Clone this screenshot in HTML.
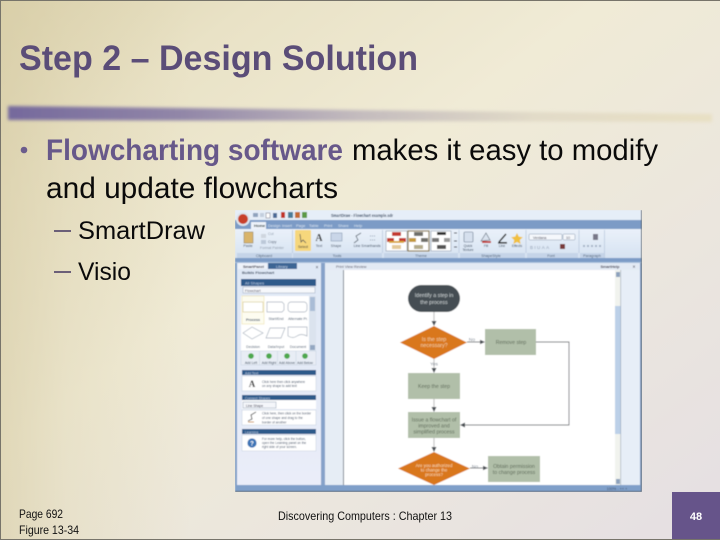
<!DOCTYPE html>
<html lang="en"><head><meta charset="utf-8"><title>Step 2 – Design Solution</title>
<style>
html,body{margin:0;padding:0;width:720px;height:540px;overflow:hidden;background:#eee8d6}
svg{display:block}
text{font-family:"Liberation Sans",sans-serif}
</style></head><body>
<svg width="720" height="540" viewBox="0 0 720 540" xmlns="http://www.w3.org/2000/svg">
<defs>
<linearGradient id="bg" x1="0" y1="0" x2="1" y2="1">
<stop offset="0" stop-color="#ddd4b0"/><stop offset=".18" stop-color="#e9e2c6"/><stop offset=".42" stop-color="#f0ebd6"/><stop offset=".7" stop-color="#ebe6de"/><stop offset="1" stop-color="#e5dfe3"/>
</linearGradient>
<linearGradient id="edge" x1="0" y1="0" x2="1" y2="0">
<stop offset="0" stop-color="#d6cba4" stop-opacity=".6"/><stop offset=".35" stop-color="#d6cba4" stop-opacity=".28"/><stop offset="1" stop-color="#d6cba4" stop-opacity="0"/>
</linearGradient>
<linearGradient id="rule" x1="0" y1="0" x2="1" y2="0">
<stop offset="0" stop-color="#75699c"/><stop offset=".25" stop-color="#9287a8"/><stop offset=".5" stop-color="#c4bcbe"/><stop offset=".75" stop-color="#e2dbc8"/><stop offset="1" stop-color="#e8e0c4"/>
</linearGradient>
<linearGradient id="rib" x1="0" y1="0" x2="0" y2="1"><stop offset="0" stop-color="#eaf1fa"/><stop offset="1" stop-color="#d6e2f1"/></linearGradient>
<linearGradient id="panel" x1="0" y1="0" x2="0" y2="1"><stop offset="0" stop-color="#dfe8f5"/><stop offset="1" stop-color="#eaedf9"/></linearGradient>
<filter id="b2" x="-5%" y="-100%" width="110%" height="300%"><feGaussianBlur stdDeviation="1.7"/></filter>
<filter id="soft" x="0" y="0" width="100%" height="100%"><feGaussianBlur stdDeviation=".4"/></filter>
</defs>

<rect width="720" height="540" fill="url(#bg)"/>
<rect width="190" height="540" fill="url(#edge)"/>
<path d="M.5 540V.5H720" fill="none" stroke="#77746a"/>
<path d="M0 539.500H720" stroke="#77746a"/>

<path d="M8 106L712 114V122L8 120Z" fill="url(#rule)" filter="url(#b2)"/>

<text x="19" y="70" font-size="35" font-weight="bold" fill="#5b4d78" textLength="399" lengthAdjust="spacingAndGlyphs">Step 2 – Design Solution</text>

<circle cx="24" cy="150" r="3.300" fill="#6b5c8c"/>
<text x="46" y="160" font-size="29.500" font-weight="bold" fill="#67588a" textLength="297" lengthAdjust="spacingAndGlyphs">Flowcharting software</text>
<text x="352" y="160" font-size="29.500" fill="#0a0a0a" textLength="306" lengthAdjust="spacingAndGlyphs">makes it easy to modify</text>
<text x="46" y="198" font-size="29.500" fill="#0a0a0a" textLength="292" lengthAdjust="spacingAndGlyphs">and update flowcharts</text>

<rect x="54" y="230" width="17" height="2" fill="#6b5f78"/>
<text x="78" y="239" font-size="25" fill="#0a0a0a" textLength="127" lengthAdjust="spacingAndGlyphs">SmartDraw</text>
<rect x="54" y="271" width="17" height="2" fill="#6b5f78"/>
<text x="78" y="280" font-size="25" fill="#0a0a0a" textLength="53" lengthAdjust="spacingAndGlyphs">Visio</text>

<text x="19" y="518" font-size="12" fill="#111" textLength="44" lengthAdjust="spacingAndGlyphs">Page 692</text>
<text x="19" y="534" font-size="12" fill="#111" textLength="60" lengthAdjust="spacingAndGlyphs">Figure 13-34</text>
<text x="278" y="520" font-size="12" fill="#111" textLength="174" lengthAdjust="spacingAndGlyphs">Discovering Computers : Chapter 13</text>

<rect x="672" y="492" width="48" height="47" fill="#66548a"/>
<text x="696" y="520" font-size="11" font-weight="bold" fill="#fff" text-anchor="middle">48</text>

<!-- application screenshot -->
<g filter="url(#soft)">
<rect x="235" y="210" width="407" height="282" fill="#7d9cc6"/>
<rect x="235" y="210" width="406" height="10" fill="#e6eef8"/>
<rect x="235" y="220" width="406" height="9" fill="#7b9bc6"/>
<circle cx="243" cy="219" r="7" fill="#dfe6ee"/><circle cx="243" cy="219" r="5" fill="#c8402a"/>
<g>
<rect x="253" y="213" width="5" height="4" fill="#8fa3bd"/><rect x="260" y="213" width="4" height="4" fill="#c3cedd"/>
<rect x="266" y="213" width="4" height="5" fill="#fff" stroke="#667" stroke-width=".5"/><rect x="273" y="213" width="4" height="5" fill="#4b6a96"/>
<rect x="281" y="212" width="4" height="6" fill="#c2362b"/><rect x="288" y="212" width="5" height="6" fill="#4c7c9a"/>
<rect x="295" y="212" width="5" height="6" fill="#c46a35"/><rect x="302" y="212" width="5" height="6" fill="#5c9a45"/>
</g>
<text x="331" y="217" font-size="4.800" font-weight="bold" fill="#3c4d64" textLength="62" lengthAdjust="spacingAndGlyphs">SmartDraw - Flowchart example.sdr</text>
<rect x="251" y="222" width="15" height="7" fill="#eef3fa"/>
<g font-size="4" fill="#dde6f2">
<text x="254" y="227" font-weight="bold" fill="#233">Home</text><text x="268" y="227">Design</text><text x="282" y="227">Insert</text><text x="296" y="227">Page</text><text x="309" y="227">Table</text><text x="324" y="227">Print</text><text x="338" y="227">Share</text><text x="354" y="227">Help</text>
</g>

<rect x="235" y="229" width="406" height="29" fill="url(#rib)"/>
<rect x="237" y="253" width="55" height="5" fill="#c5d4e8"/><rect x="293" y="253" width="89" height="5" fill="#c5d4e8"/><rect x="384" y="253" width="74" height="5" fill="#c5d4e8"/><rect x="460" y="253" width="65" height="5" fill="#c5d4e8"/><rect x="527" y="253" width="51" height="5" fill="#c5d4e8"/><rect x="580" y="253" width="24" height="5" fill="#c5d4e8"/>
<g font-size="3.800" fill="#42566f" text-anchor="middle">
<text x="264" y="257">Clipboard</text><text x="337" y="257">Tools</text><text x="421" y="257">Theme</text><text x="491" y="257">ShapeStyle</text><text x="551" y="257">Font</text><text x="592" y="257">Paragraph</text>
</g>
<path d="M292.500 230V253M382.500 230V253M459 230V253M526 230V253M579 230V253M604.500 230V258" stroke="#b6c6db" stroke-width=".7"/>
<rect x="244" y="232" width="9" height="11" fill="#d9b46b" stroke="#8a7a50" stroke-width=".5"/>
<text x="248" y="247" font-size="3.600" fill="#3a4a5e" text-anchor="middle">Paste</text>
<rect x="261" y="234" width="5" height="4" fill="#cfd6df"/><rect x="261" y="240" width="5" height="4" fill="#bcc8d8"/>
<g font-size="3.600" fill="#8c98a8"><text x="268" y="235">Cut</text><text x="268" y="243" fill="#4b5a6e">Copy</text><text x="260" y="249">Format Painter</text></g>
<rect x="295" y="230" width="16" height="21" rx="1" fill="#f6d77c"/>
<path d="M300 234l1 8 2-2 3 3" fill="none" stroke="#555" stroke-width=".8"/>
<text x="303" y="248" font-size="3.600" fill="#333" text-anchor="middle">Select</text>
<text x="319" y="241" font-size="10" font-weight="bold" fill="#222" text-anchor="middle" style="font-family:'Liberation Serif',serif">A</text>
<text x="319" y="247" font-size="3.600" fill="#3a4a5e" text-anchor="middle">Text</text>
<rect x="331" y="233" width="11" height="8" fill="#c9d6e8" stroke="#7a8ea8" stroke-width=".5"/>
<text x="336" y="247" font-size="3.600" fill="#3a4a5e" text-anchor="middle">Shape</text>
<path d="M354 243l4-3-2-4 5-3" fill="none" stroke="#55606c" stroke-width=".8"/>
<text x="353" y="247" font-size="3.600" fill="#3a4a5e" text-anchor="middle" dx="4">Line</text>
<path d="M370 236h5M370 240h5" stroke="#75859a" stroke-width=".8" stroke-dasharray="1 1"/>
<text x="371" y="247" font-size="3.600" fill="#3a4a5e" text-anchor="middle">Smarthands</text>

<g stroke="#9aa7b8" stroke-width=".7" fill="#fff">
<rect x="386" y="231" width="21" height="20"/><rect x="408" y="231" width="21" height="20" stroke="#8e7c50" stroke-width="1.200"/><rect x="431" y="231" width="20" height="20"/>
</g>
<g fill="#c43b30"><rect x="392" y="232" width="9" height="4"/><rect x="387" y="238" width="7" height="4"/><rect x="399" y="238" width="7" height="4"/></g>
<rect x="392" y="245" width="9" height="4" fill="#e3c99a"/><rect x="389" y="241" width="15" height="2" fill="#d9a93a"/>
<g fill="#70706a"><rect x="414" y="232" width="9" height="4"/><rect x="409" y="238" width="7" height="4" fill="#c49a3c"/><rect x="421" y="238" width="7" height="4"/><rect x="414" y="245" width="9" height="4" fill="#b4ac8c"/></g>
<g fill="#333"><rect x="437" y="232" width="9" height="3"/><rect x="432" y="238" width="7" height="4" fill="#777"/><rect x="444" y="238" width="6" height="4" fill="#999"/><rect x="437" y="245" width="9" height="4" fill="#555"/></g>
<path d="M454 233h3M454 241h3M454 247h3" stroke="#334" stroke-width="1"/>
<rect x="464" y="232" width="9" height="10" rx="1" fill="#d6e0ee" stroke="#66778c" stroke-width=".6"/>
<text x="468" y="247" font-size="3.400" fill="#3a4a5e" text-anchor="middle">Quick</text><text x="468" y="251" font-size="3.400" fill="#3a4a5e" text-anchor="middle">Texture</text>
<path d="M481 241l5-8 4 7z" fill="#d9e2ee" stroke="#55616f" stroke-width=".6"/><rect x="482" y="241" width="9" height="2" fill="#c23a30"/>
<text x="486" y="247" font-size="3.400" fill="#3a4a5e" text-anchor="middle">Fill</text>
<path d="M499 242l7-8" stroke="#222" stroke-width="1.400"/><rect x="498" y="242" width="9" height="1.600" fill="#222"/>
<text x="502" y="247" font-size="3.400" fill="#3a4a5e" text-anchor="middle">Line</text>
<path d="M517 233l1.800 3.600 4 .6-3 2.800.8 4-3.600-2-3.600 2 .8-4-3-2.800 4-.6z" fill="#f0c040"/>
<text x="517" y="247" font-size="3.400" fill="#3a4a5e" text-anchor="middle">Effects</text>
<rect x="529" y="234" width="33" height="6" rx="1" fill="#f5f8fc" stroke="#8899ae" stroke-width=".5"/><text x="533" y="239" font-size="3.600" fill="#445">Verdana</text>
<rect x="563" y="234" width="12" height="6" rx="1" fill="#f5f8fc" stroke="#8899ae" stroke-width=".5"/><text x="566" y="239" font-size="3.600" fill="#445">10</text>
<text x="530" y="249" font-size="4.500" fill="#8e9cb0" letter-spacing="1.400">BIUAA</text>
<rect x="560" y="244" width="5" height="5" fill="#7a3a3a"/>
<rect x="593" y="234" width="5" height="6" fill="#778"/>
<path d="M583 246h20" stroke="#a6b4c6" stroke-width="2" stroke-dasharray="2 2"/>

<rect x="235" y="258" width="406" height="4" fill="#7b9bc6"/>
<rect x="235" y="262" width="406" height="1" fill="#a9bfdc"/>

<!-- left panel -->
<rect x="237" y="263" width="84" height="222" fill="url(#panel)"/>
<rect x="321" y="263" width="4" height="222" fill="#86a2c9"/>
<rect x="238" y="263" width="29" height="6" fill="#eef2f9"/><rect x="268" y="263" width="29" height="6" fill="#3d6594"/>
<text x="243" y="268" font-size="3.800" font-weight="bold" fill="#334">SmartPanel</text><text x="276" y="268" font-size="3.800" fill="#cfdcee">Library</text>
<text x="317" y="269" font-size="5" fill="#334" text-anchor="middle">×</text>
<text x="242" y="274" font-size="4" font-weight="bold" fill="#3a4a60">Builds Flowchart</text>
<rect x="241" y="279" width="75" height="7" fill="#2f5a8a"/><text x="245" y="284.500" font-size="4" fill="#b8cbe2">All Shapes</text>
<rect x="243" y="287" width="72" height="6" fill="#f6f8fb" stroke="#9aa9bc" stroke-width=".5"/><text x="245" y="292" font-size="3.600" fill="#556">Flowchart</text>
<rect x="241" y="296" width="75" height="55" fill="#fff"/>
<rect x="242" y="296" width="22" height="28" fill="#fdfcf0" stroke="#efe3b0" stroke-width=".6"/>
<g fill="#fff" stroke="#a8b2be" stroke-width=".7">
<rect x="243" y="302" width="20" height="10" stroke="#d8cd9c"/><path d="M267 302h15l2 2v6l-2 2h-15z"/><rect x="288" y="302" width="19" height="10" rx="3"/>
<path d="M243 333l9-6 11 6-11 6z"/><path d="M270 328h15l-4 10h-15z"/><path d="M288 327h19v9q-6-3-10 0t-9 0z"/>
</g>
<g font-size="3.600" fill="#4a5a6e" text-anchor="middle">
<text x="253" y="321" font-weight="bold">Process</text><text x="276" y="320">Start/End</text><text x="298" y="320">Alternate Pr.</text>
<text x="253" y="348">Decision</text><text x="276" y="348">Data/Input</text><text x="298" y="348">Document</text>
</g>
<rect x="309" y="296" width="7" height="55" fill="#dbe3ee"/><rect x="310" y="297" width="5" height="14" fill="#a9bcd6"/><rect x="310" y="345" width="5" height="5" fill="#93a7c2"/>
<rect x="241" y="351" width="75" height="14" fill="#e8edf5" stroke="#c6d1df" stroke-width=".5"/>
<path d="M259.500 351v14M277.500 351v14M296 351v14" stroke="#c6d1df" stroke-width=".5"/>
<g fill="#4ea84e"><circle cx="251" cy="356" r="2.800"/><circle cx="269" cy="356" r="2.800"/><circle cx="287" cy="356" r="2.800"/><circle cx="305" cy="356" r="2.800"/></g>
<g font-size="3.300" fill="#3a4a5e" text-anchor="middle"><text x="251" y="364">Add Left</text><text x="269" y="364">Add Right</text><text x="287" y="364">Add Above</text><text x="305" y="364">Add Below</text></g>

<rect x="242" y="370" width="74" height="5" fill="#2f5a8a"/><text x="245" y="374.400" font-size="3.400" fill="#c2d2e6">Add Text</text>
<rect x="242" y="376" width="74" height="15" fill="#fff" stroke="#cbd5e3" stroke-width=".6"/>
<text x="252" y="387" font-size="9" font-weight="bold" fill="#222" text-anchor="middle" style="font-family:'Liberation Serif',serif">A</text>
<g font-size="3.200" fill="#475468"><text x="262" y="383">Click here then click anywhere</text><text x="262" y="387">on any shape to add text</text></g>

<rect x="242" y="395" width="74" height="5" fill="#2f5a8a"/><text x="245" y="399.400" font-size="3.400" fill="#c2d2e6">Connect Shapes</text>
<rect x="242" y="400" width="74" height="9" fill="#fff"/>
<rect x="243" y="402" width="33" height="6" fill="#f4f6fa" stroke="#93a2b6" stroke-width=".5"/><text x="246" y="406.800" font-size="3.400" fill="#445">Line Shape</text>
<rect x="242" y="410" width="74" height="15" fill="#fff" stroke="#cbd5e3" stroke-width=".6"/>
<path d="M248 421l4-2-1-4 5-3" fill="none" stroke="#555" stroke-width=".9"/><path d="M248 422h6" stroke="#c98a30" stroke-width=".9"/>
<g font-size="3.200" fill="#475468"><text x="262" y="414.500">Click here, then click on the border</text><text x="262" y="419">of one shape and drag to the</text><text x="262" y="423.500">border of another</text></g>

<rect x="242" y="429" width="74" height="5" fill="#2f5a8a"/><text x="245" y="433.400" font-size="3.400" fill="#c2d2e6">Learning</text>
<rect x="242" y="435" width="74" height="16" fill="#fff" stroke="#cbd5e3" stroke-width=".6"/>
<circle cx="252" cy="443" r="4.600" fill="#3a73b5"/><text x="252" y="445.500" font-size="6" font-weight="bold" fill="#fff" text-anchor="middle">?</text>
<g font-size="3.200" fill="#475468"><text x="262" y="440">For more help, click the button,</text><text x="262" y="444">open the Learning panel on the</text><text x="262" y="448">right side of your screen.</text></g>

<!-- centre -->
<rect x="325" y="263" width="18" height="222" fill="#e6edf5"/>
<rect x="325" y="263" width="296" height="7" fill="#e3eaf4"/>
<text x="336" y="268" font-size="3.800" fill="#556">Print View</text><text x="354" y="268" font-size="3.800" fill="#556">Review</text>
<rect x="343" y="270" width="272" height="215" fill="#fff"/>
<path d="M343.500 270V485" stroke="#5b6675" stroke-width=".8"/>
<rect x="615" y="270" width="6" height="215" fill="#f1f3ee"/><rect x="615" y="306" width="6" height="128" fill="#bcd0e8"/><rect x="616" y="272" width="4" height="5" fill="#8da2bd"/><rect x="616" y="479" width="4" height="5" fill="#8da2bd"/>
<path d="M620.800 270V485" stroke="#8d9cad" stroke-width=".7"/>
<rect x="621" y="263" width="19" height="222" fill="#e7eef7"/>
<rect x="621" y="263" width="19" height="7" fill="#e3eaf4"/>
<text x="610" y="268" font-size="3.800" font-weight="bold" fill="#445" text-anchor="middle">SmartHelp</text>
<text x="634" y="268.500" font-size="5" fill="#334" text-anchor="middle">×</text>

<!-- flowchart -->
<path d="M434 312V322M434 359V370M434 399V409M434 438V449" stroke="#c6c6c6" stroke-width="1.200" fill="none"/>
<path d="M467 342H482M536 342H569V425H463M470 468H485" stroke="#6f7377" stroke-width=".9" fill="none"/>
<g fill="#4a4f54">
<path d="M431.500 321h5L434 326zM431.500 368h5L434 373zM431.500 407h5L434 412zM431.500 447h5L434 452z"/>
<path d="M480 339.800V344.200L485 342zM483 465.800V470.200L488 468zM465 422.500V427.500L460 425z"/>
</g>
<rect x="408" y="285" width="52" height="27" rx="13.500" fill="#454d52"/>
<path d="M434 326L467 342.500 434 359 400 342.500Z" fill="#d9771f"/>
<path d="M434 452L470 468.500 434 485 398 468.500Z" fill="#d9771f"/>
<g fill="#b1bfa9"><rect x="408" y="373" width="52" height="26"/><rect x="408" y="412" width="52" height="26"/><rect x="485" y="329" width="51" height="26"/><rect x="488" y="456" width="52" height="26"/></g>
<g font-size="5.300" text-anchor="middle" fill="#c9cfd2"><text x="434" y="297">Identify a step in</text><text x="434" y="304">the process</text></g>
<g font-size="5.300" text-anchor="middle" fill="#f3d0a4"><text x="434" y="341">Is the step</text><text x="434" y="347">necessary?</text></g>
<g font-size="4.400" text-anchor="middle" fill="#fbdfbc"><text x="434" y="467">Are you authorized</text><text x="434" y="471.500">to change the</text><text x="434" y="476">process?</text></g>
<g font-size="5.200" text-anchor="middle" fill="#5d6a58"><text x="434" y="388">Keep the step</text><text x="434" y="421.500">Issue a flowchart of</text><text x="434" y="427.500">improved and</text><text x="434" y="433.500">simplified process</text><text x="511" y="344">Remove step</text><text x="514" y="468">Obtain permission</text><text x="514" y="474">to change process</text></g>
<g font-size="4.800" text-anchor="middle" fill="#7c8692"><text x="434" y="365.500">Yes</text><text x="472" y="341">No</text><text x="475" y="468">No</text></g>

<rect x="235" y="485" width="407" height="6" fill="#7f9fc9"/>
<text x="617" y="490" font-size="3.800" fill="#3c4d64" text-anchor="middle">100%  - ++ +</text>
<path d="M641.500 210V491.500H235" fill="none" stroke="#4e5c6c" stroke-width="1"/>
</g>
</svg>
</body></html>
